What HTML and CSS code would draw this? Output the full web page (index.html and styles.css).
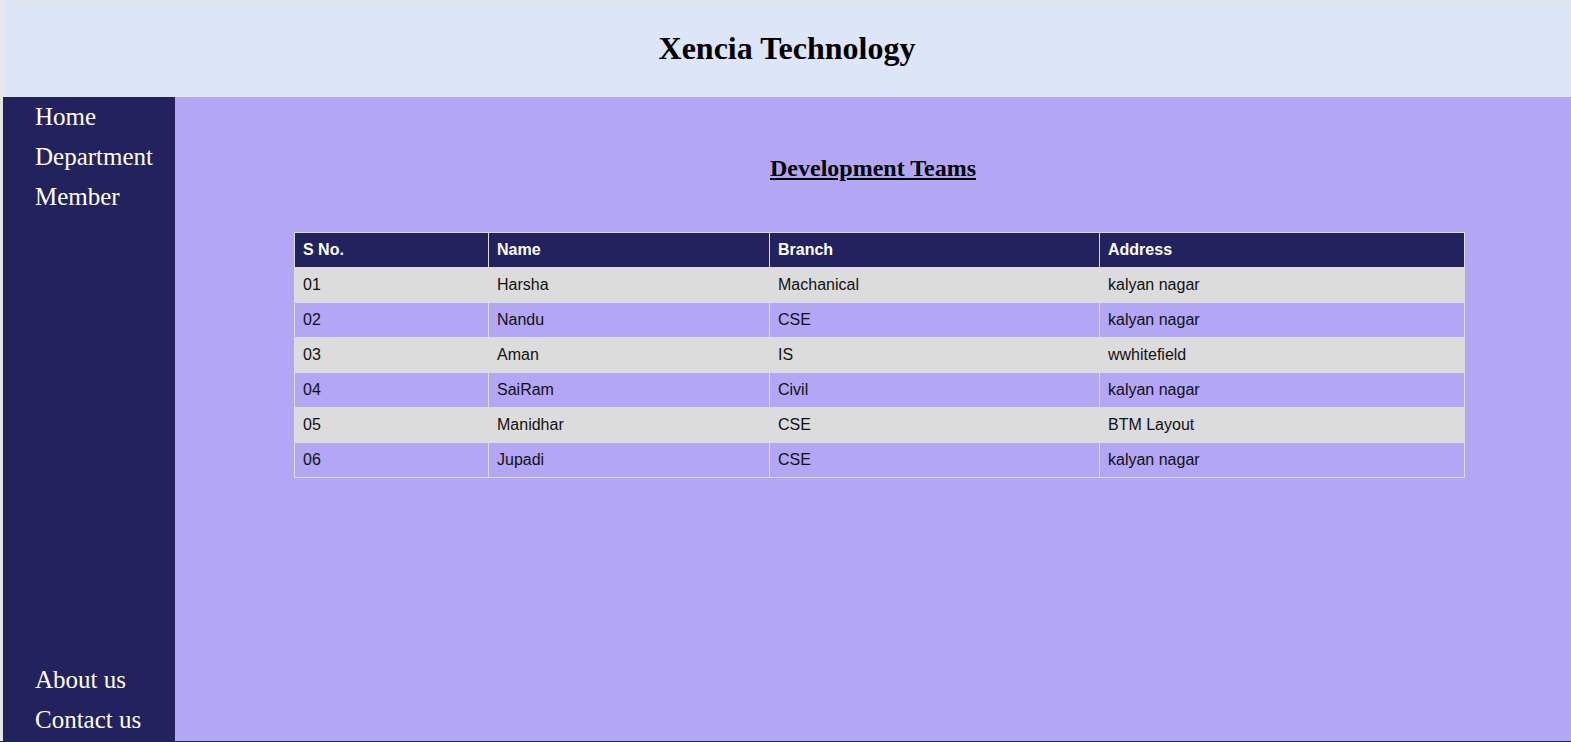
FILE: index.html
```html
<!DOCTYPE html>
<html lang="en">
<head>
<meta charset="utf-8">
<title>Xencia Technology</title>
<link rel="stylesheet" href="styles.css">
</head>
<body>
<div class="page">
  <header class="top">
    <h1 class="brand">Xencia Technology</h1>
  </header>
  <div class="layout">
    <nav class="side">
      <ul class="nav-group">
        <li><a href="#">Home</a></li>
        <li><a href="#">Department</a></li>
        <li><a href="#">Member</a></li>
      </ul>
      <ul class="nav-group">
        <li><a href="#">About us</a></li>
        <li><a href="#">Contact us</a></li>
      </ul>
    </nav>
    <main class="content">
      <h2 class="section-title">Development Teams</h2>
      <table class="teams">
        <colgroup>
          <col class="c1"><col class="c2"><col class="c3"><col class="c4">
        </colgroup>
        <thead>
          <tr><th>S No.</th><th>Name</th><th>Branch</th><th>Address</th></tr>
        </thead>
        <tbody>
          <tr><td>01</td><td>Harsha</td><td>Machanical</td><td>kalyan nagar</td></tr>
          <tr><td>02</td><td>Nandu</td><td>CSE</td><td>kalyan nagar</td></tr>
          <tr><td>03</td><td>Aman</td><td>IS</td><td>wwhitefield</td></tr>
          <tr><td>04</td><td>SaiRam</td><td>Civil</td><td>kalyan nagar</td></tr>
          <tr><td>05</td><td>Manidhar</td><td>CSE</td><td>BTM Layout</td></tr>
          <tr><td>06</td><td>Jupadi</td><td>CSE</td><td>kalyan nagar</td></tr>
        </tbody>
      </table>
    </main>
  </div>
  <div class="bottom-strip"></div>
</div>
</body>
</html>
```
FILE: styles.css
```css
* { box-sizing: border-box; }
html, body { margin: 0; padding: 0; }
body {
  background: #e6e6e6;
  font-family: "Liberation Serif", "Times New Roman", serif;
  overflow: hidden;
}
.page {
  height: 742px;
  padding: 1px 0 0 3px;
  display: flex;
  flex-direction: column;
}
.top {
  height: 96px;
  background: #dde6f6;
  display: flex;
  align-items: center;
  justify-content: center;
}
.brand {
  margin: 0;
  font-size: 32px;
  font-weight: bold;
  line-height: 37px;
  color: #000;
  padding-bottom: 1px;
}
.layout {
  flex: 1;
  display: flex;
}
.side {
  width: 172px;
  background: #22235e;
  display: flex;
  flex-direction: column;
  justify-content: space-between;
  padding: 0 0 1px 32px;
}
.nav-group {
  list-style: none;
  margin: 0;
  padding: 0;
}
.nav-group li {
  font-size: 25px;
  line-height: 40px;
}
.nav-group a {
  color: #fff;
  text-decoration: none;
}
.content {
  flex: 1;
  background: #b3a6f4;
  padding-left: 119px;
}
.section-title {
  margin: 57px 0 50px;
  padding-right: 119px;
  text-align: center;
  font-size: 24px;
  line-height: 28px;
  font-weight: bold;
  text-decoration: underline;
  color: #000;
}
.teams {
  width: 1170px;
  table-layout: fixed;
  border-collapse: collapse;
  font-family: "Liberation Sans", Arial, sans-serif;
  font-size: 16px;
  line-height: 18px;
}
.c1 { width: 194px; }
.c2 { width: 281px; }
.c3 { width: 330px; }
.c4 { width: 365px; }
.teams th, .teams td {
  border: 1px solid #dddddd;
  padding: 8px 8px;
  text-align: left;
  height: 35px;
}
.teams th {
  background: #22235e;
  color: #fff;
  font-weight: bold;
}
.teams td { color: #111; }
.teams tbody tr:nth-child(odd) td { background: #dcdcdc; }
.bottom-strip {
  height: 1px;
  background: #1f2a44;
  margin-left: -3px;
}
```
